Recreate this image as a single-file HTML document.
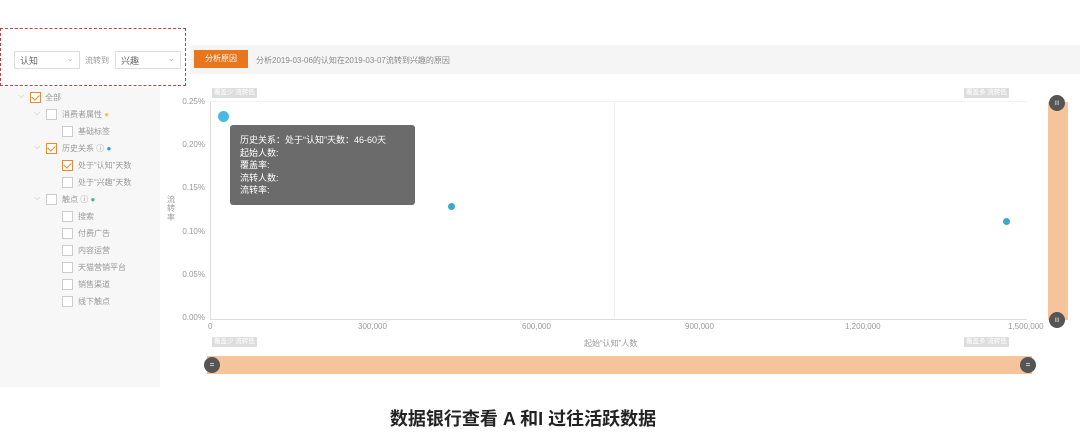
<!DOCTYPE html>
<html><head><meta charset="utf-8"><style>
body{margin:0;width:1080px;height:433px;background:#fff;position:relative;overflow:hidden;font-family:"Liberation Sans","Noto Sans CJK SC",sans-serif;color:#888}
.a{position:absolute}
.sel{position:absolute;top:51px;height:18px;border:1px solid #ddd;background:#fff;font-size:9px;color:#666;line-height:18px;padding-left:5px;box-sizing:border-box}
.sel:after{content:"⌄";position:absolute;right:5px;top:-3px;color:#bbb}
.cb{position:absolute;width:9px;height:9px;border:1px solid #ccc;background:#fff}
.cb.on{border-color:#e88a3c}
.cb.on:after{content:"";position:absolute;left:2px;top:0px;width:4px;height:6px;border:solid #e88a3c;border-width:0 1.5px 1.5px 0;transform:rotate(45deg)}
.t{position:absolute;font-size:8px;color:#999;white-space:nowrap}
.y{position:absolute;font-size:8px;color:#999;right:875px;text-align:right}
.tag{position:absolute;font-size:6.5px;background:#ddd;color:#fff;padding:0 2px;height:10px;line-height:10px}
.knob{position:absolute;width:16px;height:16px;border-radius:50%;background:#555;color:#fff;font-size:8px;text-align:center;line-height:16px}
</style></head><body>
<div class="a" style="left:190px;top:45px;width:890px;height:29px;background:#f5f5f5"></div>
<div class="a" style="left:0;top:28px;width:186px;height:58px;border:1px dashed #b44;box-sizing:border-box"></div>
<div class="sel" style="left:14px;width:66px">认知</div>
<div class="t" style="left:85px;top:55px">流转到</div>
<div class="sel" style="left:115px;width:66px">兴趣</div>
<div class="a" style="left:194px;top:50px;width:54px;height:18px;background:#e8761d;color:#fff;font-size:8px;line-height:18px;text-align:center">分析原因</div>
<div class="t" style="left:256px;top:55px;color:#888">分析2019-03-06的认知在2019-03-07流转到兴趣的原因</div>
<div class="a" style="left:0;top:87px;width:160px;height:300px;background:#f7f7f7"></div>
<div class="t" style="left:18px;top:91px;color:#bbb">⌵</div><div class="cb on" style="left:30px;top:92px"></div><div class="t" style="left:45px;top:92px">全部</div>
<div class="t" style="left:34px;top:108px;color:#bbb">⌵</div><div class="cb" style="left:46px;top:109px"></div><div class="t" style="left:62px;top:109px">消费者属性 <span style="color:#f0c060">●</span></div>
<div class="cb" style="left:62px;top:126px"></div><div class="t" style="left:78px;top:126px">基础标签</div>
<div class="t" style="left:34px;top:142px;color:#bbb">⌵</div><div class="cb on" style="left:46px;top:143px"></div><div class="t" style="left:62px;top:143px">历史关系 ⓘ <span style="color:#2aa0c8">●</span></div>
<div class="cb on" style="left:62px;top:160px"></div><div class="t" style="left:78px;top:160px">处于“认知”天数</div>
<div class="cb" style="left:62px;top:177px"></div><div class="t" style="left:78px;top:177px">处于“兴趣”天数</div>
<div class="t" style="left:34px;top:193px;color:#bbb">⌵</div><div class="cb" style="left:46px;top:194px"></div><div class="t" style="left:62px;top:194px">触点 ⓘ <span style="color:#40b8a0">●</span></div>
<div class="cb" style="left:62px;top:211px"></div><div class="t" style="left:78px;top:211px">搜索</div>
<div class="cb" style="left:62px;top:228px"></div><div class="t" style="left:78px;top:228px">付费广告</div>
<div class="cb" style="left:62px;top:245px"></div><div class="t" style="left:78px;top:245px">内容运营</div>
<div class="cb" style="left:62px;top:262px"></div><div class="t" style="left:78px;top:262px">天猫营销平台</div>
<div class="cb" style="left:62px;top:279px"></div><div class="t" style="left:78px;top:279px">销售渠道</div>
<div class="cb" style="left:62px;top:296px"></div><div class="t" style="left:78px;top:296px">线下触点</div>
<div class="tag" style="left:212px;top:88px">覆盖少 流转低</div>
<div class="tag" style="left:964px;top:88px">覆盖多 流转低</div>
<div class="tag" style="left:212px;top:337px">覆盖少 流转低</div>
<div class="tag" style="left:964px;top:337px">覆盖多 流转低</div>
<div class="y" style="top:97px">0.25%</div><div class="y" style="top:140px">0.20%</div><div class="y" style="top:183px">0.15%</div><div class="y" style="top:227px">0.10%</div><div class="y" style="top:270px">0.05%</div><div class="y" style="top:313px">0.00%</div>
<div class="t" style="left:167px;top:195px;width:8px;line-height:9px;white-space:normal">流转率</div>
<div class="a" style="left:210px;top:101px;width:816px;height:217px;border-left:1px solid #ddd;border-bottom:1px solid #ddd;border-top:1px solid #f2f2f2"></div>
<div class="a" style="left:614px;top:101px;width:1px;height:217px;background:#eee"></div>
<div class="t" style="left:208px;top:322px">0</div><div class="t" style="left:358px;top:322px">300,000</div><div class="t" style="left:522px;top:322px">600,000</div><div class="t" style="left:685px;top:322px">900,000</div><div class="t" style="left:845px;top:322px">1,200,000</div><div class="t" style="left:1008px;top:322px">1,500,000</div>
<div class="t" style="left:584px;top:338px">起始“认知”人数</div>
<div class="a" style="left:218px;top:111px;width:11px;height:11px;border-radius:50%;background:#4ab8e0"></div>
<div class="a" style="left:448px;top:203px;width:7px;height:7px;border-radius:50%;background:#3aa8c8"></div>
<div class="a" style="left:1003px;top:218px;width:7px;height:7px;border-radius:50%;background:#3aa8c8"></div>
<div class="a" style="left:230px;top:125px;width:185px;height:80px;background:#6b6b6b;border-radius:3px;color:#fff;font-size:9px;line-height:12.5px;padding:9px 10px;box-sizing:border-box">历史关系：处于“认知”天数：46-60天<br>起始人数:<br>覆盖率:<br>流转人数:<br>流转率:</div>
<div class="a" style="left:1048px;top:102px;width:20px;height:218px;background:#f5c49a"></div>
<div class="knob" style="left:1049px;top:95px">ıı</div><div class="knob" style="left:1049px;top:312px">ıı</div>
<div class="a" style="left:207px;top:356px;width:825px;height:18px;background:#f5c49a"></div>
<div class="knob" style="left:204px;top:357px">=</div><div class="knob" style="left:1020px;top:357px">=</div>
<div class="a" style="left:383px;top:405px;width:280px;text-align:center;font-size:18px;font-weight:bold;color:#222;font-family:'Liberation Sans','Noto Sans CJK SC',sans-serif;white-space:nowrap">数据银行查看 A 和I 过往活跃数据</div>
</body></html>
